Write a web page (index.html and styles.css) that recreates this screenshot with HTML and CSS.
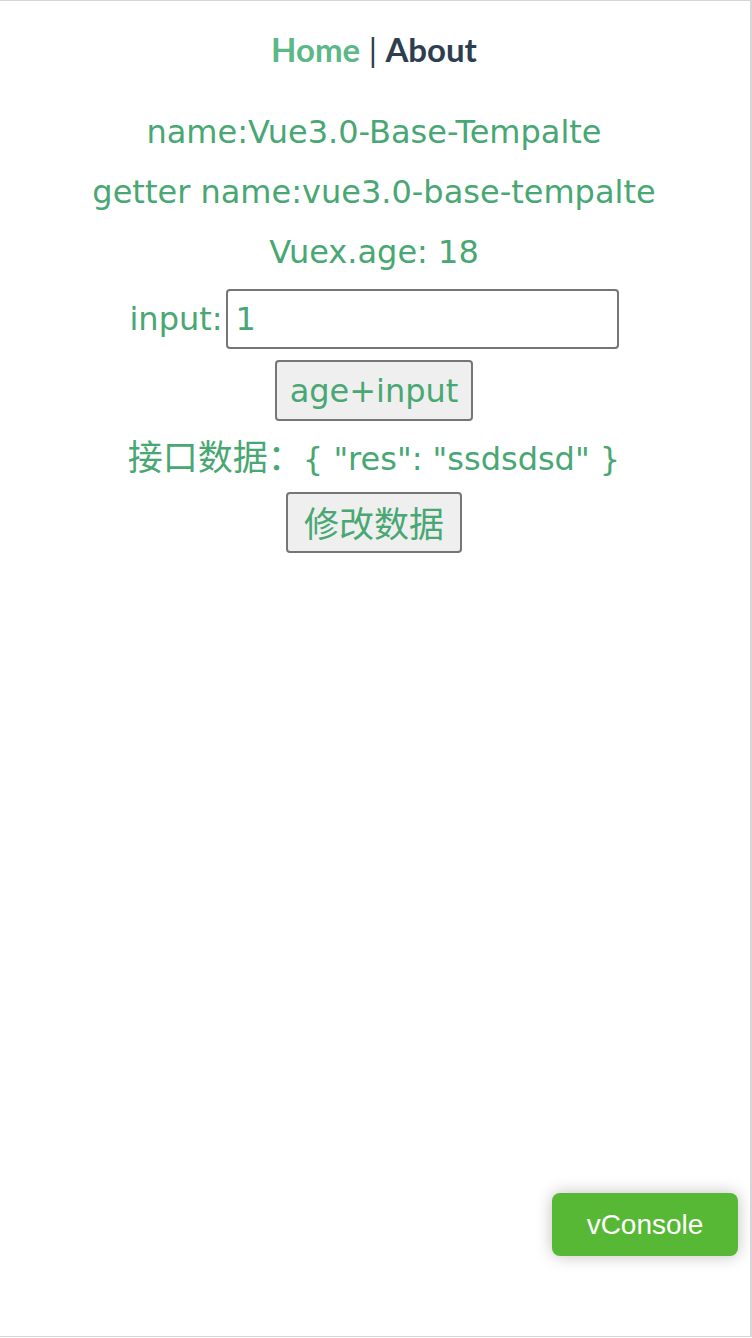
FILE: index.html
```html
<!DOCTYPE html>
<html lang="zh">
<head>
<meta charset="utf-8">
<title>Vue3.0 Base Template</title>
<link rel="stylesheet" href="styles.css">
</head>
<body>
<div class="frame">
  <div class="app">
    <nav class="nav">
      <a class="nav-link active" href="#/">Home</a><span class="sep"> | </span><a class="nav-link" href="#/about">About</a>
    </nav>
    <div class="home">
      <p class="line">name:Vue3.0-Base-Tempalte</p>
      <p class="line">getter name:vue3.0-base-tempalte</p>
      <p class="line">Vuex.age: 18</p>
      <div class="input-row"><span class="label">input:</span><input class="field" type="text" value="1"></div>
      <button class="btn btn-age">age+input</button>
      <p class="line line-api"><span class="cjk">接口数据：</span>{ "res": "ssdsdsd" }</p>
      <button class="btn btn-edit"><span class="cjk">修改数据</span></button>
    </div>
  </div>
  <div class="vconsole-switch">vConsole</div>
</div>
</body>
</html>
```
FILE: styles.css
```css
html, body {
  margin: 0;
  padding: 0;
  background: #ffffff;
}

.frame {
  position: relative;
  box-sizing: border-box;
  width: 752px;
  height: 1337px;
  border-top: 1px solid #d6d6d6;
  border-right: 2px solid #d6d6d6;
  border-bottom: 1px solid #d6d6d6;
  overflow: hidden;
}

.app {
  font-family: "DejaVu Sans", "Noto Sans CJK SC", sans-serif;
  color: #2c3e50;
  text-align: center;
  padding-right: 2px;
}

.nav {
  padding: 28px 0 33px;
  font-family: "Lato", sans-serif;
  font-size: 33px;
  line-height: 40px;
  font-weight: 700;
}

.nav-link {
  color: #2c3e50;
  text-decoration: none;
}

.nav-link.active {
  color: #5cb887;
}

.sep {
  font-weight: 400;
  color: #2c3e50;
}

.home {
  display: flex;
  flex-direction: column;
  align-items: center;
  color: #48a772;
  font-size: 32px;
}

.cjk {
  font-family: "Noto Sans CJK SC", sans-serif;
  font-size: 35px;
}

.line {
  margin: 0;
  height: 60px;
  line-height: 60px;
  white-space: nowrap;
}

.input-row {
  margin-top: 7px;
  display: flex;
  align-items: center;
  height: 60px;
}

.label {
  margin-right: 3px;
}

.field {
  box-sizing: border-box;
  width: 393px;
  height: 60px;
  border: 2px solid #767676;
  border-radius: 4px;
  padding: 0 8px;
  font-family: "DejaVu Sans", sans-serif;
  font-size: 32px;
  color: #48a772;
  background: #ffffff;
  outline: none;
}

.btn {
  box-sizing: border-box;
  height: 61px;
  border: 2px solid #767676;
  border-radius: 4px;
  background: #efefef;
  color: #48a772;
  font-family: "DejaVu Sans", "Noto Sans CJK SC", sans-serif;
  font-size: 32px;
  line-height: 1;
  padding: 0 10px;
}

.btn-age {
  margin-top: 11px;
  width: 198px;
}

.line-api {
  margin-top: 4px;
}

.btn-edit {
  margin-top: 7px;
  width: 176px;
}

.vconsole-switch {
  position: absolute;
  right: 12px;
  bottom: 80px;
  width: 186px;
  height: 63px;
  box-sizing: border-box;
  background: #57b836;
  color: #ffffff;
  border-radius: 8px;
  font-family: "Liberation Sans", Arial, sans-serif;
  font-size: 28px;
  line-height: 63px;
  text-align: center;
  box-shadow: 0 0 16px rgba(0, 0, 0, 0.25);
}
```
